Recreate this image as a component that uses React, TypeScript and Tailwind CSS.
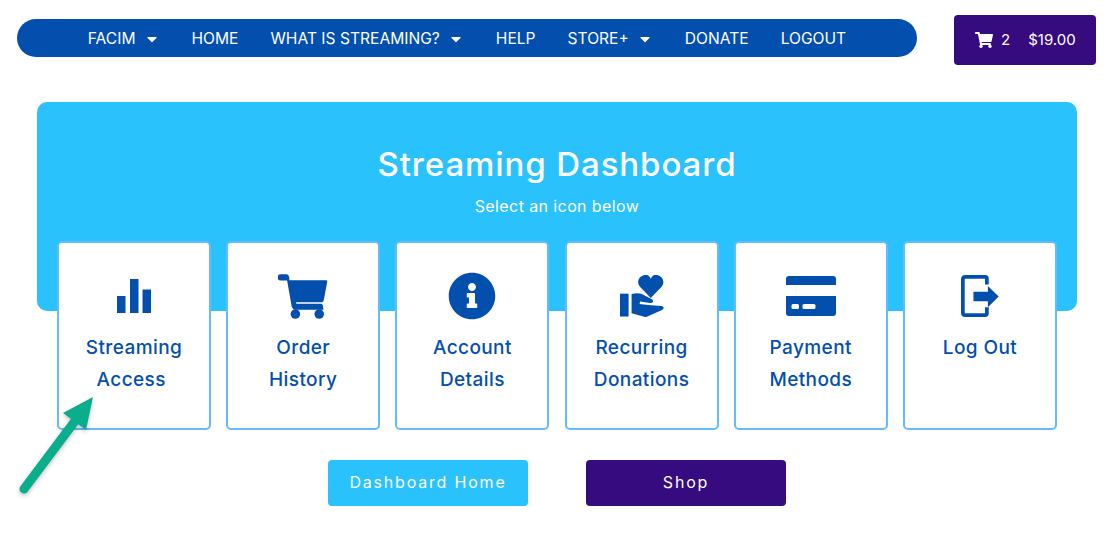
import { FaCaretDown, FaInfoCircle, FaShoppingCart } from 'react-icons/fa';

const navItems = [
  { label: 'FACIM', caret: true },
  { label: 'HOME' },
  { label: 'WHAT IS STREAMING?', caret: true },
  { label: 'HELP' },
  { label: 'STORE+', caret: true },
  { label: 'DONATE' },
  { label: 'LOGOUT' },
];

const BarsIcon = () => (
  <svg viewBox="0 0 34 34" className="w-[34px] h-[34px] fill-[#034fae]">
    <rect x="0" y="17" width="8.5" height="17" />
    <rect x="13" y="0" width="8.5" height="34" />
    <rect x="25.5" y="10.5" width="8.5" height="23.5" />
  </svg>
);

const CartIcon = () => (
  <svg viewBox="18 14 150 136" className="w-[50px] h-[45px] fill-[#034fae]">
    <path d="M26 15H42C47 15 50 18 51 22L52 33H163C166 33 167 35 166 38L156 92C155 97 153 99 150 99H72L73 104H146C150 104 152 106 153 109L155 122H70C65 122 60 117 59 113L45 34H26A9.500 9.500 0 0 1 26 15Z" />
    <circle cx="70" cy="135" r="14.500" />
    <circle cx="142" cy="135" r="14.500" />
  </svg>
);

const HandHeartIcon = () => (
  <svg viewBox="27 22 133 126" className="w-[44px] h-[42px] fill-[#034fae]">
    <rect x="27" y="78" width="26" height="69" />
    <path d="M120 91L88 58C74 42 86 21 106 21C112 21 117 26 120 33C123 26 128 21 134 21C154 21 166 42 152 58Z" />
    <path d="M62 79C80 75 92 77 100 83L122 94C130 99 128 106 118 106L88 102L86 109L120 113L152 115C161 117 161 125 154 127L105 149L62 137Z" />
  </svg>
);

const CardIcon = () => (
  <svg viewBox="0 0 50 40" className="w-[50px] h-[40px] fill-[#034fae]">
    <path d="M3 0h44a3 3 0 0 1 3 3v6H0V3a3 3 0 0 1 3-3z" />
    <path fillRule="evenodd" d="M0 20h50v17a3 3 0 0 1-3 3H3a3 3 0 0 1-3-3zM7 28a1.500 1.500 0 0 0-1.500 1.500v2A1.500 1.500 0 0 0 7 33h4.500a1.500 1.500 0 0 0 1.500-1.500v-2a1.500 1.500 0 0 0-1.500-1.500zM18 28a1.500 1.500 0 0 0-1.500 1.500v2A1.500 1.500 0 0 0 18 33h10a1.500 1.500 0 0 0 1.500-1.500v-2A1.500 1.500 0 0 0 28 28z" />
  </svg>
);

const LogOutIcon = () => (
  <svg viewBox="33 22 113 125" className="w-[38px] h-[42px]">
    <path d="M110 50V33Q110 27.500 105 27.500H46Q38.500 27.500 38.500 35V134Q38.500 141.500 46 141.500H105Q110 141.500 110 136V118" fill="none" stroke="#034fae" strokeWidth="11" />
    <path d="M70 72H113V55L145 86 113 118V100H70z" fill="#034fae" />
  </svg>
);

const cards = [
  { lines: ['Streaming', 'Access\u00a0'], icon: <BarsIcon /> },
  { lines: ['Order', 'History'], icon: <CartIcon /> },
  { lines: ['Account', 'Details'], icon: <FaInfoCircle className="w-12 h-12 text-[#034fae]" /> },
  { lines: ['Recurring', 'Donations'], icon: <HandHeartIcon /> },
  { lines: ['Payment', 'Methods'], icon: <CardIcon /> },
  { lines: ['Log Out'], icon: <LogOutIcon /> },
];

export default function App() {
  return (
    <div className="relative w-[1113px] h-[536px] bg-white overflow-hidden font-['Inter',sans-serif]">
      {/* Header */}
      <div className="flex items-start pt-[15px] pl-[17px]">
        <nav className="mt-1 pt-[2px] w-[900px] h-[38px] rounded-full bg-[#034fae] flex items-center justify-center gap-8 text-white text-[15.600px] leading-none">
          {navItems.map((item) => (
            <span key={item.label} className="flex items-center gap-2">
              {item.label}
              {item.caret && <FaCaretDown className="w-4 h-4" />}
            </span>
          ))}
        </nav>
        <div className="ml-[37px] w-[142px] h-[50px] rounded bg-[#350b7f] flex items-center pl-[21px] text-white text-[15px]">
          <FaShoppingCart className="w-[18px] h-[16px]" />
          <span className="ml-2">2</span>
          <span className="ml-[18px]">$19.00</span>
        </div>
      </div>

      {/* Dashboard */}
      <div className="ml-[37px] mt-[37px] w-[1040px] h-[209px] rounded-[10px] bg-[#29c2fd] pt-[42px] text-center text-white">
        <h1 className="text-[33px] leading-[40px] font-medium tracking-[0.9px]">Streaming Dashboard</h1>
        <p className="mt-[12px] text-[16px] leading-[20px] tracking-[0.4px]">Select an icon below</p>
      </div>

      <div className="-mt-[70px] pl-[57px] flex gap-[15.200px]">
        {cards.map((card) => (
          <div key={card.lines[0]} className="relative w-[154px] h-[189px] rounded-[5px] border-2 border-[#64bcff] bg-white flex flex-col items-center">
            <div className="h-[89px] w-full flex items-center justify-center pt-[17px]">{card.icon}</div>
            <div className="text-center text-[19px] leading-[32px] font-medium tracking-[0.4px] text-[#034fae]">
              {card.lines.map((line) => (
                <div key={line}>{line}</div>
              ))}
            </div>
          </div>
        ))}
      </div>

      {/* Buttons */}
      <div className="mt-[30px] pl-[328px] flex gap-[58px] text-white text-[16px] tracking-[1.800px]">
        <a className="w-[200px] h-[46px] pb-[2px] rounded bg-[#29c2fd] flex items-center justify-center">Dashboard Home</a>
        <a className="w-[200px] h-[46px] pb-[2px] rounded bg-[#350b7f] flex items-center justify-center">Shop</a>
      </div>

      {/* Arrow lying over the first card */}
      <svg viewBox="0 0 120 120" className="absolute left-0 top-[390px] w-[120px] h-[120px] drop-shadow-[0_2px_2px_rgba(0,0,0,0.25)]">
        <path d="M24 99 L75 31" stroke="#0bae8c" strokeWidth="9" strokeLinecap="round" fill="none" />
        <path d="M93 7 L63 23 L86 40 Z" fill="#0bae8c" />
      </svg>
    </div>
  );
}
